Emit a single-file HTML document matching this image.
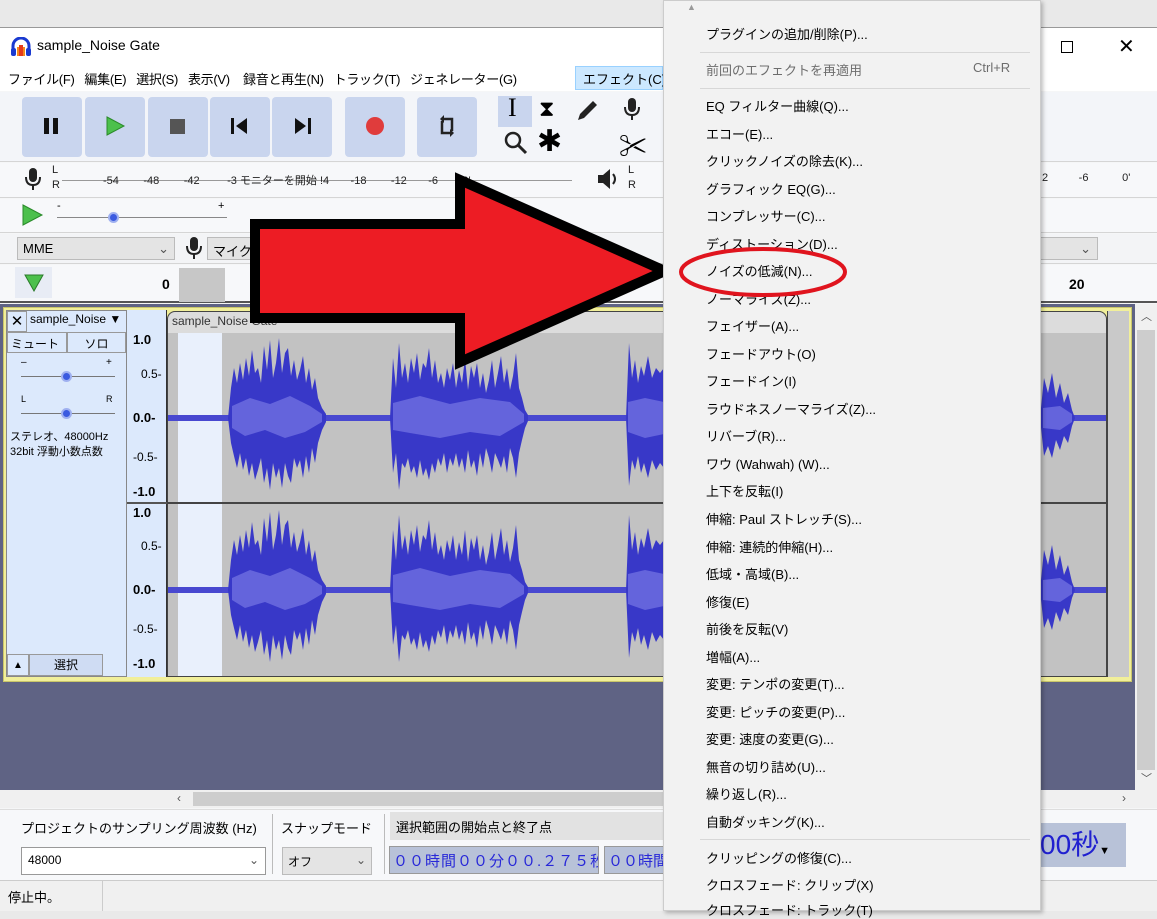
<!DOCTYPE html>
<html><head><meta charset="utf-8"><style>
*{margin:0;padding:0;box-sizing:border-box}
body{width:1157px;height:911px;overflow:hidden;background:#e9e9e9;font-family:"Liberation Sans","Noto Sans CJK JP",sans-serif;position:relative;font-size:13px;color:#000}
.a{position:absolute}
.btn{position:absolute;top:97px;width:60px;height:60px;background:#c9d5ee;border-radius:4px}
.mi{position:absolute;left:706px;font-size:13px;white-space:nowrap}
.sep{position:absolute;left:700px;width:330px;height:1px;background:#d7d7d7}
.tk{position:absolute;font-size:11px;color:#222;white-space:nowrap}
</style></head><body>
<svg width="0" height="0" style="position:absolute"><defs><g id="mic"><rect x="5" y="0" width="8" height="14" rx="4" fill="#222"/><path d="M2 9 Q2 17 9 17 Q16 17 16 9" fill="none" stroke="#222" stroke-width="2"/><rect x="8" y="17" width="2" height="5" fill="#222"/></g></defs></svg>
<div class="a" style="left:0;top:27px;width:1157px;height:884px;background:#f5f6f7;border-top:1px solid #999"></div>
<div class="a" style="left:0;top:28px;width:1157px;height:36px;background:#fff"></div>
<svg class="a" style="left:10px;top:37px" width="22" height="20" viewBox="0 0 22 20"><path d="M3 14 V9 A8 8 0 0 1 19 9 V14" fill="none" stroke="#1a3ad0" stroke-width="3"/><rect x="1" y="11" width="5" height="8" rx="2" fill="#1a3ad0"/><rect x="16" y="11" width="5" height="8" rx="2" fill="#1a3ad0"/><rect x="7" y="10" width="8" height="9" fill="#f58a1f"/><rect x="9" y="8" width="4" height="11" fill="#e53a1a"/></svg>
<div class="a" style="left:37px;top:37px;font-size:14px">sample_Noise Gate</div>
<div class="a" style="left:1061px;top:41px;width:12px;height:12px;border:1px solid #000"></div>
<div class="a" style="left:1118px;top:34px;font-size:20px;font-weight:300">✕</div>
<div class="a" style="left:0;top:64px;width:1157px;height:27px;background:#fff"></div>
<div class="a" style="left:8px;top:69px;font-size:13px;letter-spacing:-0.3px;white-space:nowrap">ファイル(F)&nbsp;&nbsp;&nbsp;編集(E)&nbsp;&nbsp;&nbsp;選択(S)&nbsp;&nbsp;&nbsp;表示(V)&nbsp;&nbsp;&nbsp;&nbsp;録音と再生(N)&nbsp;&nbsp;&nbsp;トラック(T)&nbsp;&nbsp;&nbsp;ジェネレーター(G)</div>
<div class="a" style="left:575px;top:66px;width:88px;height:24px;background:#cce8ff;border:1px solid #99d1ff"></div>
<div class="a" style="left:583px;top:69px">エフェクト(C)</div>
<div class="a" style="left:0;top:92px;width:1157px;height:70px;background:#f3f5f9;border-bottom:1px solid #d5d5d5"></div>
<div class="btn" style="left:22px"></div><div class="btn" style="left:85px"></div><div class="btn" style="left:148px"></div><div class="btn" style="left:210px"></div><div class="btn" style="left:272px"></div><div class="btn" style="left:345px"></div><div class="btn" style="left:417px"></div>
<div class="a" style="left:44px;top:118px;width:5px;height:16px;background:#111"></div><div class="a" style="left:53px;top:118px;width:5px;height:16px;background:#111"></div>
<svg class="a" style="left:106px;top:116px" width="20" height="20"><path d="M1 1 L18 10 L1 19Z" fill="#4cc04c" stroke="#2a8a2a"/></svg>
<div class="a" style="left:170px;top:119px;width:15px;height:15px;background:#555"></div>
<svg class="a" style="left:231px;top:118px" width="18" height="16"><rect x="0" y="0" width="3" height="16" fill="#111"/><path d="M16 0 L5 8 L16 16Z" fill="#111"/></svg>
<svg class="a" style="left:293px;top:118px" width="18" height="16"><rect x="15" y="0" width="3" height="16" fill="#111"/><path d="M2 0 L13 8 L2 16Z" fill="#111"/></svg>
<div class="a" style="left:366px;top:117px;width:18px;height:18px;border-radius:50%;background:#e03c3c"></div>
<svg class="a" style="left:437px;top:115px" width="20" height="22"><path d="M6 4 H15 V16 M14 18 H5 V6" fill="none" stroke="#222" stroke-width="2.5"/><path d="M7 0 L3 4 L7 8Z M13 14 L17 18 L13 22Z" fill="#222"/></svg>
<div class="a" style="left:498px;top:96px;width:34px;height:31px;background:#c9d5ee"></div>
<div class="a" style="left:508px;top:93px;font-size:26px;font-family:'Liberation Serif',serif">I</div>
<div class="a" style="left:539px;top:96px;font-size:22px">⧗</div>
<svg class="a" style="left:574px;top:98px" width="26" height="26"><path d="M4 22 L6 16 L19 3 L23 7 L10 20Z" fill="#222"/></svg>
<svg class="a" style="left:503px;top:130px" width="26" height="26"><circle cx="10" cy="10" r="7" fill="none" stroke="#222" stroke-width="2.5"/><path d="M15 15 L23 23" stroke="#222" stroke-width="3"/></svg>
<div class="a" style="left:537px;top:124px;font-size:30px;line-height:36px">✱</div>
<svg class="a" style="left:623px;top:98px" width="18" height="24"><use href="#mic"/></svg>
<div class="a" style="left:619px;top:125px;font-size:28px">✂</div>
<div class="a" style="left:0;top:163px;width:1157px;height:35px;background:#f7f8fa;border-bottom:1px solid #d5d5d5"></div>
<svg class="a" style="left:24px;top:168px" width="18" height="24"><use href="#mic"/></svg>
<div class="tk" style="left:52px;top:164px">L</div><div class="tk" style="left:52px;top:179px">R</div>
<div class="a" style="left:62px;top:180px;width:510px;height:1px;background:#999"></div>
<div class="tk" style="left:103px;top:172px">-54&nbsp;&nbsp;&nbsp;&nbsp;&nbsp;&nbsp;&nbsp;&nbsp;-48&nbsp;&nbsp;&nbsp;&nbsp;&nbsp;&nbsp;&nbsp;&nbsp;-42&nbsp;&nbsp;&nbsp;&nbsp;&nbsp;&nbsp;&nbsp;&nbsp;&nbsp;-3 モニターを開始 !4&nbsp;&nbsp;&nbsp;&nbsp;&nbsp;&nbsp;&nbsp;-18&nbsp;&nbsp;&nbsp;&nbsp;&nbsp;&nbsp;&nbsp;&nbsp;-12&nbsp;&nbsp;&nbsp;&nbsp;&nbsp;&nbsp;&nbsp;-6&nbsp;&nbsp;&nbsp;&nbsp;&nbsp;&nbsp;&nbsp;&nbsp;0'</div>
<svg class="a" style="left:596px;top:168px" width="24" height="22"><path d="M2 7 H7 L14 1 V21 L7 15 H2Z" fill="#222"/><path d="M17 6 Q21 11 17 16" fill="none" stroke="#222" stroke-width="2"/></svg>
<div class="tk" style="left:628px;top:164px">L</div><div class="tk" style="left:628px;top:179px">R</div>
<div class="tk" style="left:1042px;top:172px">2&nbsp;&nbsp;&nbsp;&nbsp;&nbsp;&nbsp;&nbsp;&nbsp;&nbsp;&nbsp;-6&nbsp;&nbsp;&nbsp;&nbsp;&nbsp;&nbsp;&nbsp;&nbsp;&nbsp;&nbsp;&nbsp;0'</div>
<div class="a" style="left:0;top:199px;width:1157px;height:34px;background:#f7f8fa;border-bottom:1px solid #d5d5d5"></div>
<svg class="a" style="left:22px;top:204px" width="22" height="22"><path d="M1 1 L20 11 L1 21Z" fill="#4cc04c" stroke="#2a8a2a"/></svg>
<div class="a" style="left:57px;top:200px;font-size:11px">-</div><div class="a" style="left:218px;top:200px;font-size:11px">+</div>
<div class="a" style="left:57px;top:217px;width:170px;height:1px;background:#888"></div>
<div class="a" style="left:108px;top:212px;width:11px;height:11px;border-radius:50%;background:#3b5be0;border:2px solid #9fb0f0"></div>
<div class="a" style="left:0;top:234px;width:1157px;height:30px;background:#f3f4f6;border-bottom:1px solid #d5d5d5"></div>
<div class="a" style="left:17px;top:237px;width:158px;height:23px;background:#e4e4e4;border:1px solid #bbb;padding:3px 5px">MME<span style="float:right;color:#555">⌄</span></div>
<svg class="a" style="left:185px;top:237px" width="18" height="24"><use href="#mic"/></svg>
<div class="a" style="left:207px;top:237px;width:120px;height:23px;background:#e4e4e4;border:1px solid #bbb;padding:3px 5px">マイク</div>
<div class="a" style="left:1040px;top:237px;width:58px;height:23px;background:#e4e4e4;border:1px solid #bbb;text-align:right;padding:3px 6px;color:#555">⌄</div>
<div class="a" style="left:0;top:265px;width:1157px;height:38px;background:#f7f8fa;border-bottom:2px solid #555"></div>
<div class="a" style="left:15px;top:267px;width:37px;height:31px;background:#e8ecf5"></div>
<svg class="a" style="left:24px;top:274px" width="20" height="18"><path d="M1 1 H19 L10 17Z" fill="#4cc04c" stroke="#2a7a2a"/></svg>
<div class="a" style="left:179px;top:268px;width:46px;height:34px;background:#c7c7c7"></div>
<div class="a" style="left:162px;top:276px;font-weight:bold;font-size:14px">0</div>
<div class="a" style="left:1069px;top:276px;font-weight:bold;font-size:14px">20</div>
<div class="a" style="left:0;top:304px;width:1135px;height:486px;background:#5f6384"></div>
<div class="a" style="left:3px;top:307px;width:1129px;height:375px;background:#f1ef9a;border:1px solid #c9c66a"></div>
<div class="a" style="left:6px;top:310px;width:121px;height:367px;background:#dce9fc;border:1px solid #888"></div>
<div class="a" style="left:7px;top:311px;width:20px;height:21px;border:1px solid #999;font-size:15px;text-align:center;line-height:19px">✕</div>
<div class="a" style="left:30px;top:312px;font-size:12px">sample_Noise ▼</div>
<div class="a" style="left:7px;top:332px;width:60px;height:21px;border:1px solid #999;font-size:12px;padding:2px 3px">ミュート</div>
<div class="a" style="left:67px;top:332px;width:59px;height:21px;border:1px solid #999;font-size:12px;text-align:center;padding-top:2px">ソロ</div>
<div class="a" style="left:21px;top:357px;font-size:10px">–</div><div class="a" style="left:106px;top:357px;font-size:10px">+</div>
<div class="a" style="left:21px;top:376px;width:94px;height:1px;background:#777"></div>
<div class="a" style="left:61px;top:371px;width:11px;height:11px;border-radius:50%;background:#3b5be0;border:2px solid #9fb0f0"></div>
<div class="a" style="left:21px;top:394px;font-size:9px">L</div><div class="a" style="left:106px;top:394px;font-size:9px">R</div>
<div class="a" style="left:21px;top:413px;width:94px;height:1px;background:#777"></div>
<div class="a" style="left:61px;top:408px;width:11px;height:11px;border-radius:50%;background:#3b5be0;border:2px solid #9fb0f0"></div>
<div class="a" style="left:10px;top:430px;font-size:11px;line-height:15px">ステレオ、48000Hz<br>32bit 浮動小数点数</div>
<div class="a" style="left:7px;top:654px;width:22px;height:22px;border:1px solid #999;font-size:10px;text-align:center;line-height:22px">▲</div>
<div class="a" style="left:29px;top:654px;width:74px;height:22px;border:1px solid #999;font-size:12px;text-align:center;line-height:20px;background:#cfdcf3">選択</div>
<div class="a" style="left:127px;top:310px;width:40px;height:367px;background:#dce9fc;border-right:1px solid #333"></div>
<div class="a" style="left:127px;top:502px;width:980px;height:2px;background:#555"></div>
<div class="a" style="left:133px;top:333px;font-weight:bold;font-size:13px;line-height:14px">1.0</div>
<div class="a" style="left:141px;top:367px;font-size:12px">0.5-</div>
<div class="a" style="left:133px;top:410px;font-weight:bold;font-size:13px">0.0-</div>
<div class="a" style="left:133px;top:450px;font-size:12px">-0.5-</div>
<div class="a" style="left:133px;top:484px;font-weight:bold;font-size:13px">-1.0</div>
<div class="a" style="left:133px;top:505px;font-weight:bold;font-size:13px">1.0</div>
<div class="a" style="left:141px;top:539px;font-size:12px">0.5-</div>
<div class="a" style="left:133px;top:582px;font-weight:bold;font-size:13px">0.0-</div>
<div class="a" style="left:133px;top:622px;font-size:12px">-0.5-</div>
<div class="a" style="left:133px;top:656px;font-weight:bold;font-size:13px">-1.0</div>
<div class="a" style="left:167px;top:311px;width:940px;height:366px;background:#c2c2c2;border:1px solid #444;border-radius:8px 8px 0 0"></div>
<div class="a" style="left:168px;top:312px;width:938px;height:21px;background:#dcdcdc;border-radius:8px 8px 0 0"></div>
<div class="a" style="left:172px;top:314px;font-size:12px;color:#333">sample_Noise Gate</div>
<div class="a" style="left:178px;top:333px;width:44px;height:343px;background:#e9f0fc"></div>
<div class="a" style="left:167px;top:502px;width:940px;height:2px;background:#444"></div>
<svg class="a" style="left:0;top:0" width="1157" height="911">
<defs><g id="w">
<rect x="168" y="-3" width="938" height="6" fill="#4848d0"/>
<path fill="#3838c8" d="M228 0 L231 -30 234 -50 237 -35 240 -55 243 -38 246 -60 249 -42 252 -68 255 -45 258 -50 261 -35 264 -72 267 -48 270 -78 273 -40 276 -55 279 -80 282 -45 285 -65 288 -70 291 -42 294 -58 297 -38 300 -48 303 -62 306 -35 309 -50 312 -28 315 -40 318 -20 322 -10 326 -4 326 4 322 12 318 25 315 45 312 30 309 55 306 38 303 60 300 42 297 50 294 40 291 65 288 58 285 45 282 70 279 50 276 60 273 45 270 72 267 50 264 65 261 40 258 52 255 62 252 45 249 58 246 40 243 52 240 35 237 50 234 38 231 25 228 0Z"/>
<path fill="#3838c8" d="M390 0 L393 -60 396 -30 399 -75 402 -40 405 -55 408 -35 411 -60 414 -45 417 -65 420 -38 423 -55 426 -50 429 -70 432 -40 435 -58 438 -35 441 -45 444 -30 447 -50 450 -38 453 -55 456 -30 459 -48 462 -35 465 -60 468 -28 471 -52 474 -40 477 -55 480 -30 483 -45 486 -25 489 -38 492 -58 495 -30 498 -45 501 -62 504 -35 507 -50 510 -28 513 -42 516 -65 519 -30 522 -20 525 -8 528 -3 528 3 525 10 522 22 519 35 516 60 513 40 510 30 507 55 504 38 501 50 498 42 495 35 492 55 489 40 486 30 483 50 480 35 477 58 474 42 471 50 468 32 465 55 462 40 459 50 456 35 453 48 450 40 447 55 444 35 441 48 438 40 435 55 432 45 429 62 426 50 423 58 420 42 417 60 414 48 411 55 408 40 405 50 402 45 399 72 396 35 393 55 390 0Z"/>
<path fill="#3838c8" d="M626 0 L629 -75 632 -40 635 -58 638 -35 641 -52 644 -42 648 -62 652 -40 656 -50 660 -45 664 -50 664 50 660 45 656 52 652 42 648 60 644 45 641 55 638 38 635 52 632 42 629 68 626 0Z"/>
<path fill="#3838c8" d="M1040 0 L1044 -40 1048 -25 1052 -45 1056 -20 1060 -35 1064 -15 1068 -25 1072 -8 1075 0 1072 8 1068 25 1064 18 1060 32 1056 22 1052 40 1048 28 1044 38Z"/>
<g fill="#6464dc"><path d="M232 -12 L250 -20 270 -14 290 -22 310 -12 322 -4 322 4 305 14 285 20 265 12 245 18 232 10Z M393 -15 L420 -22 450 -14 480 -20 510 -16 524 -4 524 4 500 18 470 14 440 20 410 15 393 12Z M628 -16 L645 -20 664 -16 664 16 645 20 628 14Z M1043 -10 L1060 -12 1072 -4 1072 4 1060 12 1043 10Z"/></g>
</g></defs>
<use href="#w" transform="translate(0,418)"/>
<use href="#w" transform="translate(0,590)"/>
</svg>
<div class="a" style="left:1107px;top:311px;width:22px;height:366px;background:#c9c9c9;border-left:1px solid #444"></div>
<div class="a" style="left:1135px;top:304px;width:22px;height:486px;background:#f0f0f0"></div>
<div class="a" style="left:1137px;top:330px;width:18px;height:440px;background:#cdcdcd"></div>
<div class="a" style="left:1141px;top:308px;font-size:11px;color:#555">︿</div>
<div class="a" style="left:1141px;top:770px;font-size:11px;color:#555">﹀</div>
<div class="a" style="left:0;top:790px;width:1157px;height:18px;background:#f0f0f0"></div>
<div class="a" style="left:193px;top:792px;width:470px;height:14px;background:#cdcdcd"></div>
<div class="a" style="left:177px;top:791px;font-size:12px;color:#555">‹</div>
<div class="a" style="left:1122px;top:791px;font-size:12px;color:#555">›</div>
<div class="a" style="left:0;top:809px;width:1157px;height:71px;background:#f7f8fa;border-top:1px solid #ddd"></div>
<div class="a" style="left:21px;top:818px;font-size:13px">プロジェクトのサンプリング周波数 (Hz)</div>
<div class="a" style="left:272px;top:814px;width:1px;height:60px;background:#bbb"></div>
<div class="a" style="left:281px;top:818px;font-size:13px">スナップモード</div>
<div class="a" style="left:384px;top:814px;width:1px;height:60px;background:#bbb"></div>
<div class="a" style="left:390px;top:812px;width:280px;height:28px;background:#e2e2e2"></div>
<div class="a" style="left:396px;top:817px;font-size:13px">選択範囲の開始点と終了点</div>
<div class="a" style="left:21px;top:847px;width:245px;height:28px;background:#fff;border:1px solid #999;padding:5px 6px;font-size:12px">48000<span style="float:right;color:#555">⌄</span></div>
<div class="a" style="left:282px;top:847px;width:90px;height:28px;background:#e4e4e4;border:1px solid #bbb;padding:5px 5px;font-size:12px">オフ<span style="float:right;color:#555">⌄</span></div>
<div class="a" style="left:389px;top:846px;width:210px;height:28px;background:#b8c2d8;border:1px solid #999;color:#2828d8;font-size:15px;padding:3px 3px;letter-spacing:1px;white-space:nowrap;overflow:hidden">００時間００分００.２７５秒<span style="color:#000;font-size:10px">▼</span></div>
<div class="a" style="left:604px;top:846px;width:60px;height:28px;background:#b8c2d8;border:1px solid #999;color:#2828d8;font-size:15px;padding:3px 3px;overflow:hidden;white-space:nowrap">００時間</div>
<div class="a" style="left:1040px;top:823px;width:86px;height:44px;background:#b8c2d8;color:#2020d0;font-size:28px;line-height:44px;white-space:nowrap">00秒<span style="color:#000;font-size:11px">▼</span></div>
<div class="a" style="left:0;top:880px;width:1157px;height:31px;background:#f0f0f0;border-top:1px solid #ccc"></div>
<div class="a" style="left:8px;top:887px;font-size:13px">停止中。</div>
<div class="a" style="left:102px;top:881px;width:1px;height:30px;background:#ccc"></div>
<svg class="a" style="left:0;top:0" width="1157" height="911"><path d="M255 224 L460 224 L460 180 L665 271 L460 362 L460 318 L255 318Z" fill="#ed1c24" stroke="#000" stroke-width="10" stroke-linejoin="miter"/></svg>
<div class="a" style="left:663px;top:0;width:378px;height:911px;background:#f2f2f2;border:1px solid #ccc;box-shadow:2px 2px 4px rgba(0,0,0,.25)"></div>
<div class="a" style="left:687px;top:2px;font-size:9px;color:#999">▲</div>
<div class="mi" style="top:24px">プラグインの追加/削除(P)...</div>
<div class="sep" style="top:52px"></div>
<div class="mi" style="top:60px;color:#6d6d6d">前回のエフェクトを再適用</div><div class="mi" style="top:60px;left:973px;color:#6d6d6d">Ctrl+R</div>
<div class="sep" style="top:88px"></div>
<div class="mi" style="top:96px">EQ フィルター曲線(Q)...</div>
<div class="mi" style="top:124px">エコー(E)...</div>
<div class="mi" style="top:151px">クリックノイズの除去(K)...</div>
<div class="mi" style="top:179px">グラフィック EQ(G)...</div>
<div class="mi" style="top:206px">コンプレッサー(C)...</div>
<div class="mi" style="top:234px">ディストーション(D)...</div>
<div class="mi" style="top:261px">ノイズの低減(N)...</div>
<div class="mi" style="top:289px">ノーマライズ(Z)...</div>
<div class="mi" style="top:316px">フェイザー(A)...</div>
<div class="mi" style="top:344px">フェードアウト(O)</div>
<div class="mi" style="top:371px">フェードイン(I)</div>
<div class="mi" style="top:399px">ラウドネスノーマライズ(Z)...</div>
<div class="mi" style="top:426px">リバーブ(R)...</div>
<div class="mi" style="top:454px">ワウ (Wahwah) (W)...</div>
<div class="mi" style="top:481px">上下を反転(I)</div>
<div class="mi" style="top:509px">伸縮: Paul ストレッチ(S)...</div>
<div class="mi" style="top:537px">伸縮: 連続的伸縮(H)...</div>
<div class="mi" style="top:564px">低域・高域(B)...</div>
<div class="mi" style="top:592px">修復(E)</div>
<div class="mi" style="top:619px">前後を反転(V)</div>
<div class="mi" style="top:647px">増幅(A)...</div>
<div class="mi" style="top:674px">変更: テンポの変更(T)...</div>
<div class="mi" style="top:702px">変更: ピッチの変更(P)...</div>
<div class="mi" style="top:729px">変更: 速度の変更(G)...</div>
<div class="mi" style="top:757px">無音の切り詰め(U)...</div>
<div class="mi" style="top:784px">繰り返し(R)...</div>
<div class="mi" style="top:812px">自動ダッキング(K)...</div>
<div class="sep" style="top:839px"></div>
<div class="mi" style="top:848px">クリッピングの修復(C)...</div>
<div class="mi" style="top:875px">クロスフェード: クリップ(X)</div>
<div class="mi" style="top:900px">クロスフェード: トラック(T)</div>
<svg class="a" style="left:0;top:0" width="1157" height="911"><ellipse cx="763" cy="272" rx="82" ry="23" fill="none" stroke="#e0141e" stroke-width="4"/></svg>
</body></html>
